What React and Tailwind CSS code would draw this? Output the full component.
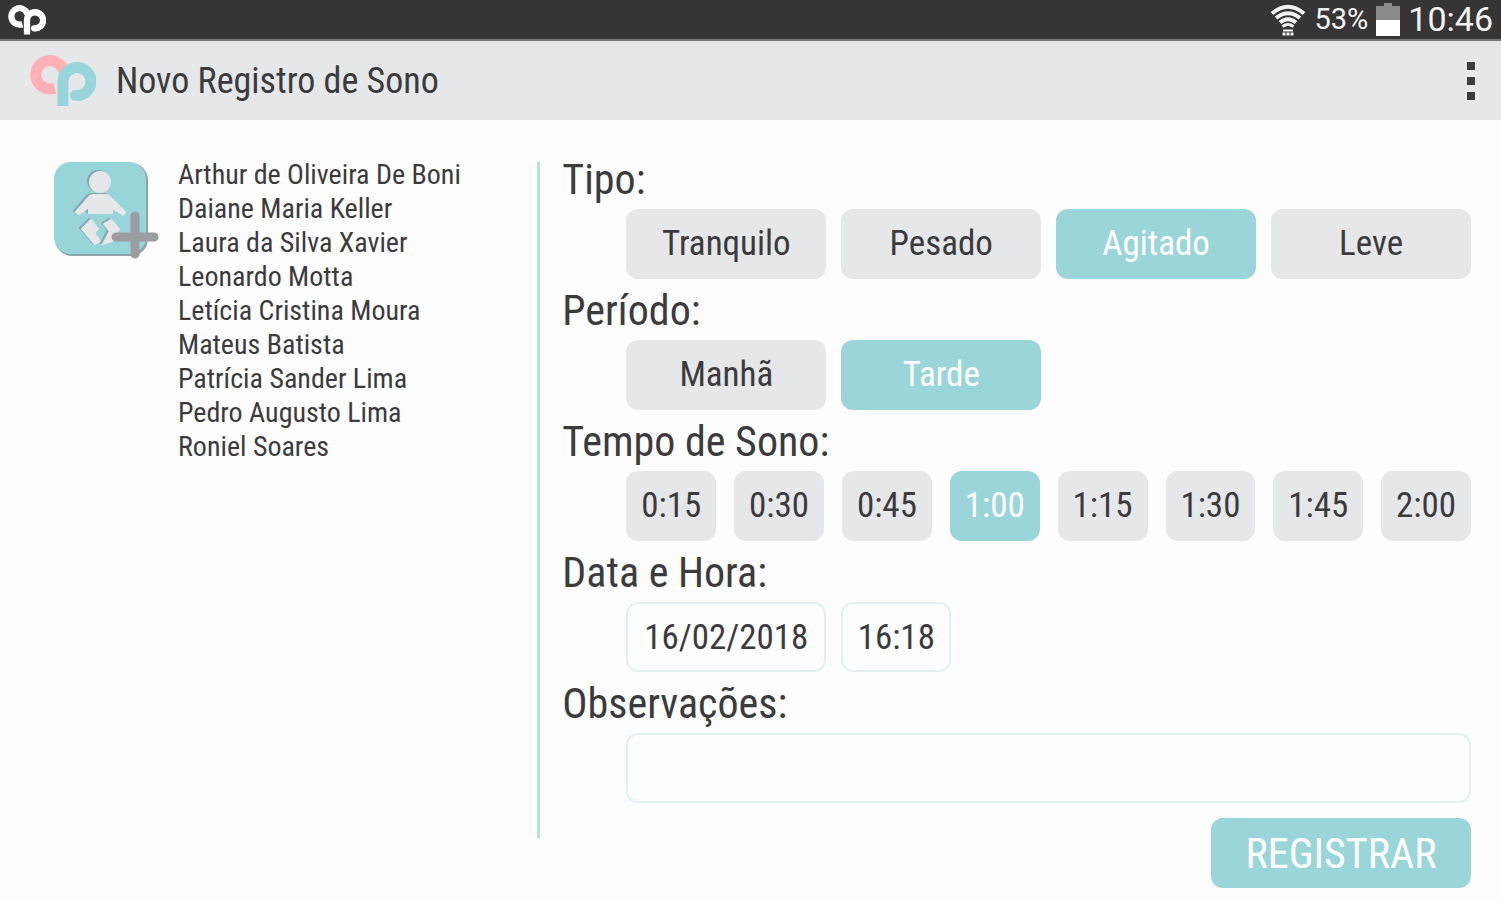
import React, { useState } from 'react';

const children = [
  'Arthur de Oliveira De Boni',
  'Daiane Maria Keller',
  'Laura da Silva Xavier',
  'Leonardo Motta',
  'Letícia Cristina Moura',
  'Mateus Batista',
  'Patrícia Sander Lima',
  'Pedro Augusto Lima',
  'Roniel Soares',
];

const types = ['Tranquilo', 'Pesado', 'Agitado', 'Leve'];
const periods = ['Manhã', 'Tarde'];
const durations = ['0:15', '0:30', '0:45', '1:00', '1:15', '1:30', '1:45', '2:00'];

const Logo = ({ left, right, className }) => (
  <svg viewBox="0 0 66 52" fill="none" strokeWidth="11" strokeLinejoin="round" className={className} aria-hidden="true">
    <path d="M25 33.500Q23 34 20 34A14.200 14.200 0 1 1 33 14L36 18" stroke={left} />
    <path d="M33 51V26.500A14 14 0 1 1 46.500 40.500" stroke={right} />
    <circle cx="45.500" cy="40.500" r="5.500" fill={right} />
  </svg>
);

const WifiIcon = () => (
  <svg viewBox="0 0 36 32" fill="none" stroke="#f2f2f2" strokeWidth="4" className="h-8 w-9" aria-hidden="true">
    <path d="M2 9.500Q18 -4 34 9.500" />
    <path d="M6 14Q18 4.500 30 14" />
    <path d="M10 18.500Q18 12 26 18.500" />
    <path d="M12.500 22.500Q18 18.500 23.500 22.500" strokeWidth="3" />
    <path d="M13 26.500H23" strokeWidth="2" />
    <path d="M12.500 30H23.500" strokeWidth="3" strokeDasharray="3 1" />
  </svg>
);

const BatteryIcon = () => (
  <svg viewBox="0 0 24 34" className="h-[34px] w-6" aria-hidden="true">
    <path d="M8 0H16V3H24V17H0V3H8Z" fill="#8b8b8b" />
    <path d="M0 17H24V33H0Z" fill="#fff" />
  </svg>
);

const BabyShape = ({ fill }) => (
  <g fill={fill} stroke={fill} strokeWidth="2" strokeLinejoin="round">
    <circle cx="46" cy="20" r="10" />
    <path d="M39 33H52Q55 33 57 36L71 50L69 53L58 46V51H35V45L25 52L22 50L35 35Q36 33 39 33Z" />
    <path d="M37 58L28 67L41 82L46 79L40 71L44 67Z" />
    <path d="M57 58L50 62L56 69L49 82L58 79L65 67Z" />
  </g>
);

const AddChildIcon = () => (
  <svg viewBox="0 0 106 98" className="h-[98px] w-[106px]" aria-hidden="true">
    <rect x="1" y="1" width="93" height="93" rx="17" fill="#8ea5a8" />
    <rect width="92" height="92" rx="17" fill="#98d5da" />
    <g transform="translate(-2 -1)">
      <BabyShape fill="#83a9ad" />
    </g>
    <BabyShape fill="#e6e7e9" />
    <path d="M81 54V92M62 75H100" stroke="#9c9da1" strokeWidth="9" strokeLinecap="round" />
  </svg>
);

const Field = ({ id, label, htmlFor, children }) => (
  <div role="group" aria-labelledby={id}>
    {htmlFor ? (
      <label id={id} htmlFor={htmlFor} className="block h-[61px] text-[42px] leading-[63px]">{label}</label>
    ) : (
      <div id={id} className="h-[61px] text-[42px] leading-[63px]">{label}</div>
    )}
    <div className="pl-16">{children}</div>
  </div>
);

const Option = ({ selected, onClick, children }) => (
  <button
    type="button"
    aria-pressed={selected}
    onClick={onClick}
    className={`h-[70px] rounded-xl text-center text-[35px] cursor-pointer ${
      selected ? 'bg-[#9ad5da] text-white' : 'bg-[#e6e7e9] text-[#3b3b3d]'
    }`}
  >
    {children}
  </button>
);

const App = () => {
  const [type, setType] = useState('Agitado');
  const [period, setPeriod] = useState('Tarde');
  const [duration, setDuration] = useState('1:00');
  const [date, setDate] = useState('16/02/2018');
  const [time, setTime] = useState('16:18');
  const [notes, setNotes] = useState('');

  return (
    <div className="min-h-screen bg-[#fdfdfd] text-[#3b3b3d] font-['Roboto_Condensed','Liberation_Sans_Narrow',Roboto,sans-serif]">
      {/* Status bar */}
      <div className="flex h-[41px] items-center justify-between border-b-2 border-[#767576] bg-[#373435] px-2 font-[Roboto,sans-serif] text-[#f4f4f4]">
        <Logo left="#fff" right="#fff" className="h-[30px] w-[38px]" />
        <div className="flex items-center gap-2">
          <WifiIcon />
          <span className="text-[29px]">53%</span>
          <BatteryIcon />
          <span className="text-[34px]">10:46</span>
        </div>
      </div>

      {/* App bar */}
      <header className="flex h-[79px] items-center justify-between bg-[#e6e7e9] pl-[30px] pr-5">
        <div className="flex items-center gap-5">
          <Logo left="#ffafb5" right="#98d5da" className="h-[52px] w-[66px]" />
          <h1 className="text-[36px]">Novo Registro de Sono</h1>
        </div>
        <button type="button" aria-label="Mais opções" className="flex w-5 flex-col items-center gap-[7px] cursor-pointer">
          <span className="h-2 w-2 bg-[#3b3d40]" />
          <span className="h-2 w-2 bg-[#3b3d40]" />
          <span className="h-2 w-2 bg-[#3b3d40]" />
        </button>
      </header>

      <main className="flex">
        {/* Children */}
        <section className="mt-[42px] flex h-[676px] w-[36%] items-start gap-[18px] border-r-3 border-[#b5dfe4] pl-[54px]">
          <button type="button" aria-label="Adicionar criança" className="shrink-0 cursor-pointer">
            <AddChildIcon />
          </button>
          <ul className="-mt-1 text-[28px] leading-[34px]">
            {children.map((name) => (
              <li key={name}>{name}</li>
            ))}
          </ul>
        </section>

        {/* Sleep form */}
        <form className="flex-1 pt-7 pr-[30px] pb-3 pl-[22px]" onSubmit={(e) => e.preventDefault()}>
          <Field id="tipo" label="Tipo:">
            <div className="grid grid-cols-4 gap-[15px]">
              {types.map((t) => (
                <Option key={t} selected={t === type} onClick={() => setType(t)}>{t}</Option>
              ))}
            </div>
          </Field>
          <Field id="periodo" label="Período:">
            <div className="grid grid-cols-4 gap-[15px]">
              {periods.map((p) => (
                <Option key={p} selected={p === period} onClick={() => setPeriod(p)}>{p}</Option>
              ))}
            </div>
          </Field>
          <Field id="tempo" label="Tempo de Sono:">
            <div className="grid grid-cols-8 gap-[18px]">
              {durations.map((d) => (
                <Option key={d} selected={d === duration} onClick={() => setDuration(d)}>{d}</Option>
              ))}
            </div>
          </Field>
          <Field id="data-hora" label="Data e Hora:" htmlFor="data">
            <div className="grid grid-cols-4 gap-[15px]">
              <input
                id="data"
                type="text"
                value={date}
                onChange={(e) => setDate(e.target.value)}
                className="h-[70px] min-w-0 rounded-xl border-2 border-[#dff1f3] text-center text-[35px]"
              />
              <input
                type="text"
                aria-label="Hora"
                value={time}
                onChange={(e) => setTime(e.target.value)}
                className="h-[70px] w-[110px] rounded-xl border-2 border-[#dff1f3] text-center text-[35px]"
              />
            </div>
          </Field>
          <Field id="observacoes" label="Observações:" htmlFor="obs">
            <input
              id="obs"
              type="text"
              value={notes}
              onChange={(e) => setNotes(e.target.value)}
              className="block h-[70px] w-full rounded-xl border-2 border-[#dff1f3] px-4 text-[35px]"
            />
          </Field>
          <div className="mt-[15px] flex justify-end">
            <button type="submit" className="h-[70px] w-[260px] rounded-xl bg-[#9ad5da] text-[42px] text-white cursor-pointer">
              REGISTRAR
            </button>
          </div>
        </form>
      </main>
    </div>
  );
};

export default App;
